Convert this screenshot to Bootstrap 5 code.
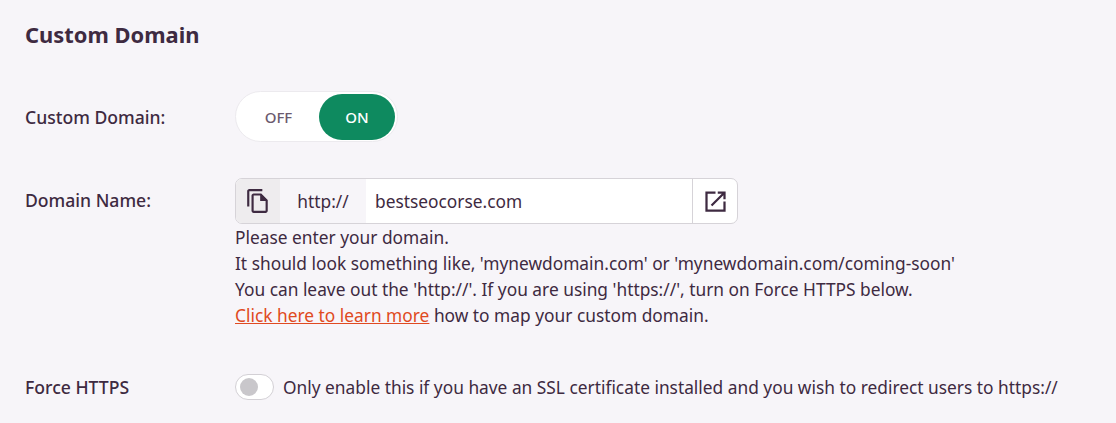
<!DOCTYPE html>
<html lang="en">
<head>
    <meta charset="UTF-8">
    <meta name="viewport" content="width=device-width, initial-scale=1.0">
    <title>Custom Domain</title>
    <link href="https://cdn.jsdelivr.net/npm/bootstrap@5.3.2/dist/css/bootstrap.min.css" rel="stylesheet">
    <style>
        body {
            background-color: #f7f5f9;
            color: #3e2a41;
            font-family: "Noto Sans", sans-serif;
            font-size: 17.33px;
            line-height: 26px;
            height: 423px;
            overflow: hidden;
        }
        .page-wrap { padding: 20px 25px 0; }
        .page-title { font-size: 21.9px; font-weight: 700; line-height: 30px; margin-bottom: 41px; }
        .field-label { width: 210px; flex-shrink: 0; font-weight: 500; font-size: 17.6px; }
        .toggle-row { margin-bottom: 36px; }
        .switch-pill {
            width: 163px; height: 51px; padding: 2px 2px 1px 5px;
            background: #fff; border: 1px solid #eceaee; border-radius: 26px;
        }
        .switch-off, .switch-on {
            border-radius: 23px;
            font-size: 15px; font-weight: 500;
            display: flex; align-items: center; justify-content: center;
        }
        .switch-off { color: #6b5a6e; width: 78px; padding-right: 3px; }
        .switch-on { background: #0e8a5f; color: #fff; width: 76px; }
        .domain-group {
            width: 503px; height: 46px; background: #fff;
            border: 1px solid #d6d3d8; border-radius: 7px; overflow: hidden;
        }
        .copy-cell { width: 44px; background: #eeecee; }
        .proto-cell { width: 86px; background: #f7f5f9; }
        .domain-text { padding-left: 9px; }
        .open-cell { width: 45px; border-left: 1px solid #d6d3d8; }
        .name-label { padding-top: 9px; }
        .help-block a { color: #e04a22; }
        .force-row { margin-top: 46px; }
        .force-check {
            width: 39px; height: 26px; border: 1px solid #d3d0d5; border-radius: 13px;
            background: #fff; padding: 3px 4px; margin-right: 9px; flex-shrink: 0;
        }
        .force-knob { width: 18px; height: 18px; border-radius: 50%; background: #c9c7cb; }
    </style>
</head>
<body>
    <div class="page-wrap">
        <div class="page-title">Custom Domain</div>

        <div class="d-flex align-items-center toggle-row">
            <div class="field-label">Custom Domain:</div>
            <div class="switch-pill d-flex">
                <div class="switch-off">OFF</div>
                <div class="switch-on">ON</div>
            </div>
        </div>

        <div class="d-flex">
            <div class="field-label name-label">Domain Name:</div>
            <div>
                <div class="domain-group d-flex align-items-stretch">
                    <div class="copy-cell d-flex align-items-center justify-content-center">
                        <svg width="26" height="26" viewBox="0 0 24 24" fill="#3e2a41">
                            <path d="M16 1H4c-1.100 0-2 .9-2 2v14h2V3h12V1zm-1 4H8c-1.100 0-1.990.9-1.990 2L6 21c0 1.100.89 2 1.990 2H19c1.100 0 2-.9 2-2V11l-6-6zM8 21V7h6v5h5v9H8z"/>
                        </svg>
                    </div>
                    <div class="proto-cell d-flex align-items-center justify-content-center">http://</div>
                    <div class="domain-text flex-grow-1 d-flex align-items-center">bestseocorse.com</div>
                    <div class="open-cell d-flex align-items-center justify-content-center">
                        <svg width="27" height="27" viewBox="0 0 24 24" fill="#3e2a41">
                            <path d="M19 19H5V5h7V3H3v18h18v-9h-2v7zM14 3v2h3.590l-9.830 9.830 1.410 1.410L19 6.410V10h2V3h-7z"/>
                        </svg>
                    </div>
                </div>
                <div class="help-block">
                    Please enter your domain.<br>
                    It should look something like, 'mynewdomain.com' or 'mynewdomain.com/coming-soon'<br>
                    You can leave out the 'http://'. If you are using 'https://', turn on Force HTTPS below.<br>
                    <a href="#">Click here to learn more</a> how to map your custom domain.
                </div>
            </div>
        </div>

        <div class="d-flex align-items-center force-row">
            <div class="field-label">Force HTTPS</div>
            <div class="force-check"><div class="force-knob"></div></div>
            <div>Only enable this if you have an SSL certificate installed and you wish to redirect users to https://</div>
        </div>
    </div>
    <script src="https://cdn.jsdelivr.net/npm/bootstrap@5.3.2/dist/js/bootstrap.bundle.min.js"></script>
</body>
</html>
